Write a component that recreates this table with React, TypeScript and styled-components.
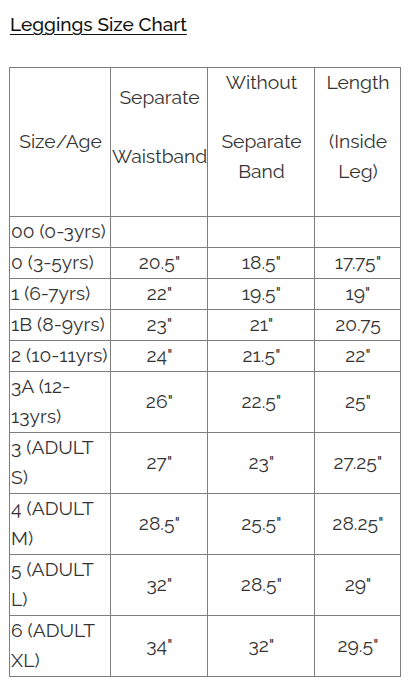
import React from "react";
import styled, { createGlobalStyle } from "styled-components";

const Global = createGlobalStyle`
  html, body { margin: 0; padding: 0; background: #fff; }
  body { font-family: Raleway, Lato, "Liberation Sans", sans-serif; color: #333; }
`;

const Page = styled.div`
  padding: 8px 9px 0 9px;
`;

const Title = styled.h2`
  margin: 0 0 0 1px;
  padding-top: 4px;
  font-size: 19px;
  font-weight: 500;
  line-height: 24px;
  color: #111;
  text-decoration: underline;
  text-decoration-thickness: 1px;
  text-underline-offset: 3px;
  height: 55px;
`;

const Table = styled.table`
  border-collapse: collapse;
  width: 391px;
  table-layout: fixed;
  font-size: 19.3px;
  line-height: 30px;
  color: #333;
`;

const Cell = styled.td<{ $first?: boolean }>`
  border: 1px solid #7d7d7d;
  padding: 0 0 0 1px;
  text-align: ${(p) => (p.$first ? "left" : "center")};
  vertical-align: middle;
  white-space: normal;
`;

const HeadPara = styled.p`
  margin: 0 0 29px 0;
`;

const rows: [string, string, string, string][] = [
  ["00 (0-3yrs)", "", "", ""],
  ["0 (3-5yrs)", "20.5\"", "18.5\"", "17.75\""],
  ["1 (6-7yrs)", "22\"", "19.5\"", "19\""],
  ["1B (8-9yrs)", "23\"", "21\"", "20.75"],
  ["2 (10-11yrs)", "24\"", "21.5\"", "22\""],
  ["3A (12-13yrs)", "26\"", "22.5\"", "25\""],
  ["3 (ADULT S)", "27\"", "23\"", "27.25\""],
  ["4 (ADULT M)", "28.5\"", "25.5\"", "28.25\""],
  ["5 (ADULT L)", "32\"", "28.5\"", "29\""],
  ["6 (ADULT XL)", "34\"", "32\"", "29.5\""],
];

export default function App() {
  return (
    <>
      <Global />
      <Page>
        <Title>Leggings Size Chart</Title>
        <Table>
          <colgroup>
            <col style={{ width: 101 }} />
            <col style={{ width: 97 }} />
            <col style={{ width: 107 }} />
            <col style={{ width: 86 }} />
          </colgroup>
          <tbody>
            <tr>
              <Cell>Size/Age</Cell>
              <Cell>
                <HeadPara>Separate</HeadPara>
                <HeadPara>Waistband</HeadPara>
              </Cell>
              <Cell>
                <HeadPara>Without</HeadPara>
                <HeadPara>Separate Band</HeadPara>
              </Cell>
              <Cell>
                <HeadPara>Length</HeadPara>
                <HeadPara>(Inside Leg)</HeadPara>
              </Cell>
            </tr>
            {rows.map((r) => (
              <tr key={r[0]}>
                <Cell $first>{r[0]}</Cell>
                <Cell>{r[1]}</Cell>
                <Cell>{r[2]}</Cell>
                <Cell>{r[3]}</Cell>
              </tr>
            ))}
          </tbody>
        </Table>
      </Page>
    </>
  );
}
